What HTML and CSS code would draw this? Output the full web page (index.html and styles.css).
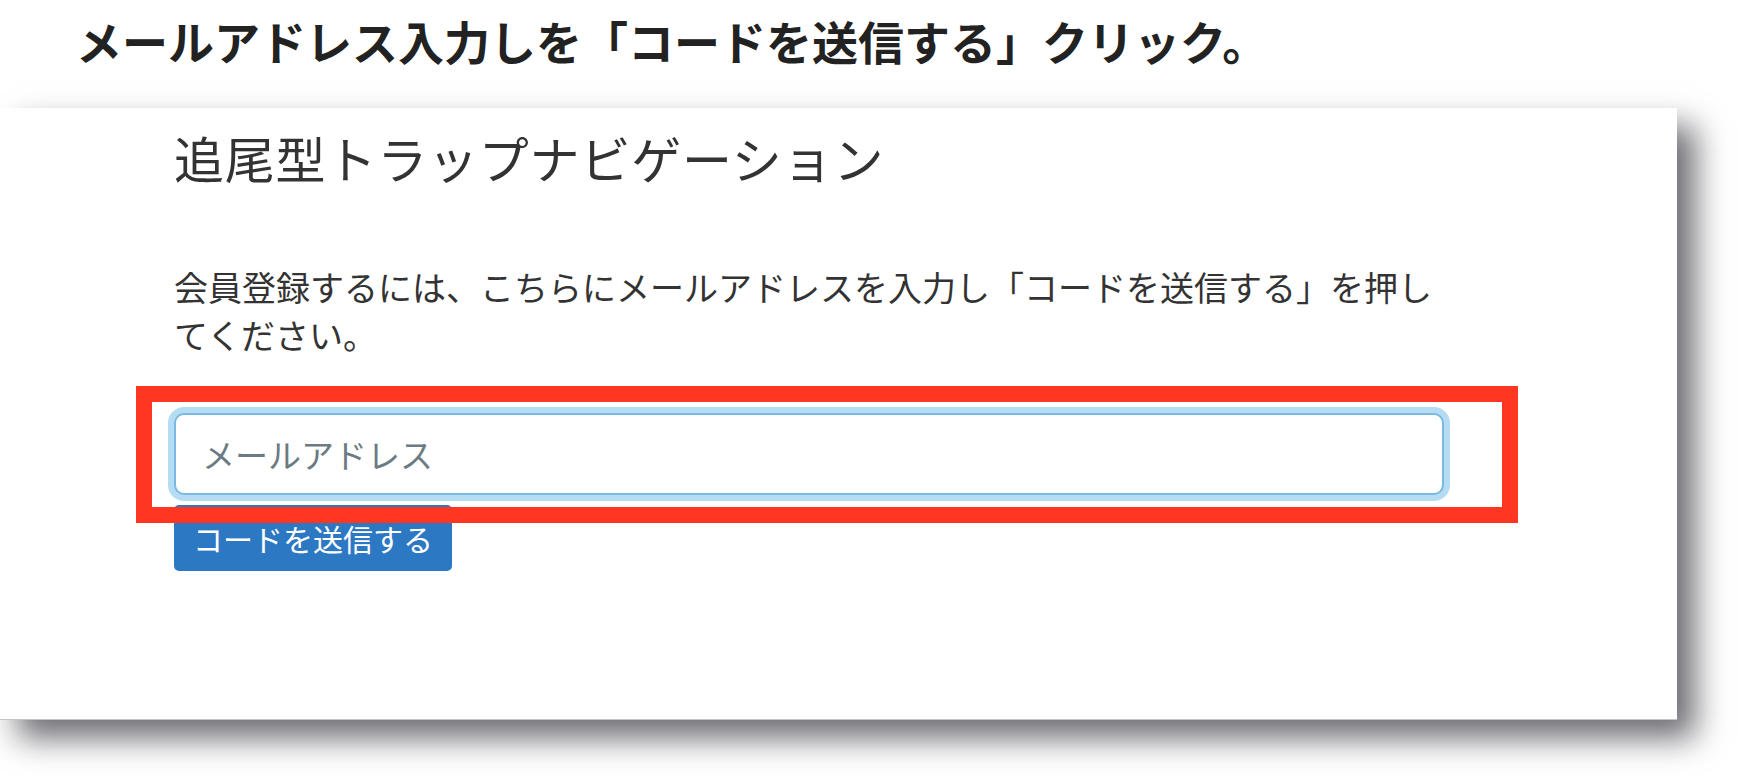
FILE: index.html
```html
<!DOCTYPE html>
<html lang="ja">
<head>
    <meta charset="UTF-8">
    <meta name="viewport" content="width=device-width, initial-scale=1.0">
    <title>コードを送信する</title>
    <link rel="stylesheet" href="styles.css">
</head>
<body>
    <h1 class="step-title">メールアドレス入力しを「コードを送信する」クリック。</h1>

    <div class="shot">
        <h2 class="panel-title">追尾型トラップナビゲーション</h2>
        <p class="panel-text">会員登録するには、こちらにメールアドレスを入力し「コードを送信する」を押してください。</p>
        <input class="email-input" type="email" placeholder="メールアドレス">
        <button class="send-btn">コードを送信する</button>

        <!-- red annotation frame drawn over the screenshot -->
        <div class="highlight"></div>
    </div>
</body>
</html>
```

FILE: styles.css
```css
html {
    background-color: #fff;
}

body {
    margin: 0;
    padding-bottom: 56px;
    background-color: #fff;
    font-family: "Noto Sans CJK JP", "Noto Sans", sans-serif;
}

.step-title {
    margin: 0;
    padding: 10px 0 0 76px;
    font-size: 46px;
    line-height: 60px;
    font-weight: 700;
    color: #222;
}

.shot {
    position: relative;
    box-sizing: border-box;
    width: 1677px;
    height: 612px;
    margin-top: 38px;
    padding: 14px 0 0 174px;
    background-color: #fff;
    border-bottom: 1px solid #c4c4c4;
    box-shadow: 18px 18px 30px rgba(10, 10, 20, 0.6);
}

.panel-title {
    margin: 0;
    font-size: 50px;
    line-height: 70px;
    font-weight: 400;
    letter-spacing: 0.8px;
    color: #333;
}

.panel-text {
    width: 1270px;
    margin: 71px 0 0;
    font-size: 34px;
    line-height: 48px;
    color: #333;
}

.email-input {
    display: block;
    box-sizing: border-box;
    width: 1270px;
    height: 82px;
    margin-top: 54px;
    padding: 0 26px;
    border: 2px solid #7cb9e2;
    border-radius: 10px;
    box-shadow: 0 0 0 6px #b4dcf3;
    outline: none;
    font-family: inherit;
    font-size: 33px;
    color: #333;
    background-color: #fff;
}

.email-input::placeholder {
    color: #6b7b83;
}

.send-btn {
    display: block;
    height: 66px;
    margin-top: 10px;
    padding: 0 19px;
    border: none;
    border-radius: 5px;
    background-color: #2d78c3;
    color: #fff;
    font-family: inherit;
    font-size: 30px;
    line-height: 36px;
    cursor: pointer;
}

.highlight {
    position: absolute;
    left: 136px;
    top: 278px;
    width: 1382px;
    height: 137px;
    box-sizing: border-box;
    border: 16px solid #ff3622;
    pointer-events: none;
}
```
